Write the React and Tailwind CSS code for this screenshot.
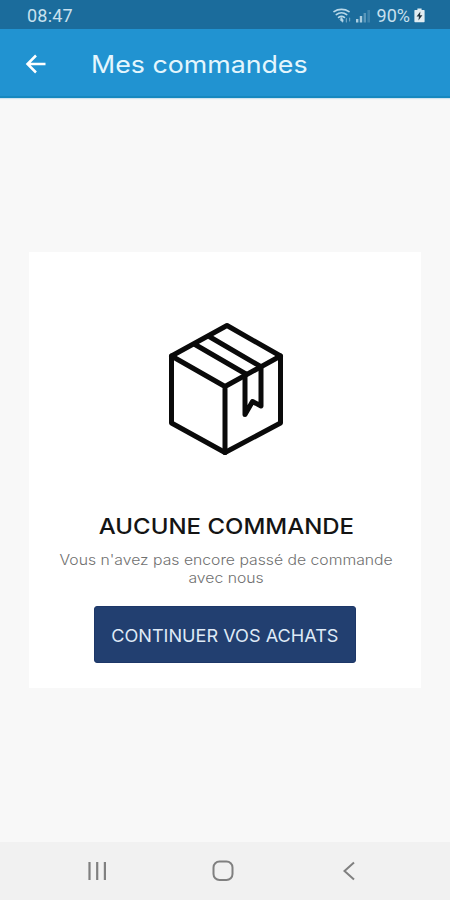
const STATUS_TEXT = "font-[Roboto,sans-serif] text-[#c8e0ee] whitespace-nowrap";

function WifiIcon() {
  return (
    <svg width="19" height="16" viewBox="0 0 19 16" fill="none" stroke="#b9d8e9" strokeWidth="1.7" strokeLinecap="round">
      <path d="M1 3.6C5.2 0.6 11.8 0.6 16 3.6" />
      <path d="M3.3 6.6C6.3 4.4 10.7 4.4 13.7 6.6" />
      <path d="M5.6 9.4C7.4 8.1 9.6 8.1 11.4 9.4" />
      <path d="M8.5 9.6L10.2 12L9.8 14.2L7.2 12Z" fill="#b9d8e9" strokeWidth="0.6" />
      <path d="M13.4 10.5V14M16.6 10V13" strokeWidth="1.2" opacity="0.5" />
    </svg>
  );
}

function SignalIcon() {
  return (
    <svg width="15" height="14" viewBox="0 0 15 14" fill="#a9cde0">
      <rect x="0" y="10" width="2.4" height="3.5" />
      <rect x="3.8" y="7" width="2.4" height="6.5" />
      <rect x="7.6" y="4" width="2.4" height="9.5" opacity="0.45" />
      <rect x="11.4" y="1" width="2.6" height="12.5" opacity="0.25" />
    </svg>
  );
}

function BatteryIcon() {
  return (
    <svg width="11" height="15" viewBox="0 0 11 15">
      <path d="M3.4 0.5H7.6V2H10a.6.6 0 0 1 .6.6V13.6a.6.6 0 0 1-.6.6H1a.6.6 0 0 1-.6-.6V2.6a.6.6 0 0 1 .6-.6H3.4Z" fill="#e2edf2" />
      <path d="M6.4 3.6L2.6 8.6H5L4.4 12.5L8.4 7.3H6Z" fill="#23343f" />
    </svg>
  );
}

function StatusBar() {
  return (
    <div className="flex h-[29px] items-center justify-between bg-[#1b6c9c] pt-0.5 pr-[25px] pl-[27px]">
      <span className={`${STATUS_TEXT} text-[18px] tracking-[0.2px]`}>08:47</span>
      <div className="flex items-center">
        <WifiIcon />
        <span className="ml-1">
          <SignalIcon />
        </span>
        <span className={`${STATUS_TEXT} ml-1.5 text-[18px]`}>90%</span>
        <span className="ml-1">
          <BatteryIcon />
        </span>
      </div>
    </div>
  );
}

function Header() {
  return (
    <header className="flex h-[69px] items-center border-b-2 border-[#1688bf] bg-[#2193d1] pt-[3px] pl-[25px] shadow-[0_1px_1px_#cfe3ee]">
      <button aria-label="Retour">
        <svg width="22" height="20" viewBox="0 0 22 20" fill="none" stroke="#fff" strokeWidth="2.5">
          <path d="M20.5 10H2.5M11 1.5L2.5 10L11 18.5" />
        </svg>
      </button>
      <h1 className="ml-11 origin-left scale-x-[1.115] pt-0.5 text-[24px] whitespace-nowrap text-[#e4f6fd]">
        Mes commandes
      </h1>
    </header>
  );
}

function BoxIcon() {
  return (
    <svg
      width="120"
      height="136"
      viewBox="166 321 120 136"
      fill="none"
      stroke="#0a0a0a"
      strokeWidth="5"
      strokeLinecap="round"
      strokeLinejoin="round"
    >
      <path d="M227 325.5L280.500 356V423L225 452.5L171.500 423V356Z" />
      <path d="M171.5 356L225 386.5L280.5 356M225 386.5V452.5" />
      <path d="M195 344.5L245 373.5M210 337L260.5 366.5" />
      <path d="M245 373.5V414.5L252.5 401.5L261 406V366.5" />
    </svg>
  );
}

function EmptyOrders() {
  return (
    <section className="mx-[29px] flex h-[436px] flex-col items-center bg-white pt-[69px] pl-0.5">
      <BoxIcon />
      <h2 className="mt-[54px] scale-x-[1.115] text-[21.5px] leading-[30px] font-medium whitespace-nowrap text-[#141414]">
        AUCUNE COMMANDE
      </h2>
      <p className="mt-2.5 scale-x-[1.125] text-center text-[14px] leading-[18px] font-light whitespace-nowrap text-[#707070]">
        Vous n'avez pas encore passé de commande
        <br />
        avec nous
      </p>
      <button className="mt-[19px] mr-0.5 h-[57px] w-[262px] rounded-[3px] border border-[#1d3768] bg-[#223f70] pt-[3px] text-[17.5px] whitespace-nowrap text-[#dfeaf6]">
        <span className="inline-block scale-x-[1.035]">CONTINUER VOS ACHATS</span>
      </button>
    </section>
  );
}

function NavBar() {
  return (
    <nav className="flex h-[58px] items-center bg-[#f1f1f1] pl-[87px]">
      <svg width="20" height="20" viewBox="0 0 20 20" stroke="#808080" strokeWidth="2.2">
        <path d="M2.5 1V19M10.2 1V19M17.9 1V19" />
      </svg>
      <svg className="ml-[105px]" width="22" height="22" viewBox="0 0 22 22" fill="none" stroke="#808080" strokeWidth="2">
        <rect x="1.5" y="1.5" width="19" height="18.5" rx="6" />
      </svg>
      <svg className="ml-[108px]" width="14" height="20" viewBox="0 0 14 20" fill="none" stroke="#808080" strokeWidth="2">
        <path d="M12 1.5L2.5 10L12 18.5" />
      </svg>
    </nav>
  );
}

export default function App() {
  return (
    <div className="flex h-[900px] w-[450px] flex-col bg-[#f8f8f8] font-[Inter,sans-serif]">
      <StatusBar />
      <Header />
      <main className="flex-1 pt-[154px]">
        <EmptyOrders />
      </main>
      <NavBar />
    </div>
  );
}
